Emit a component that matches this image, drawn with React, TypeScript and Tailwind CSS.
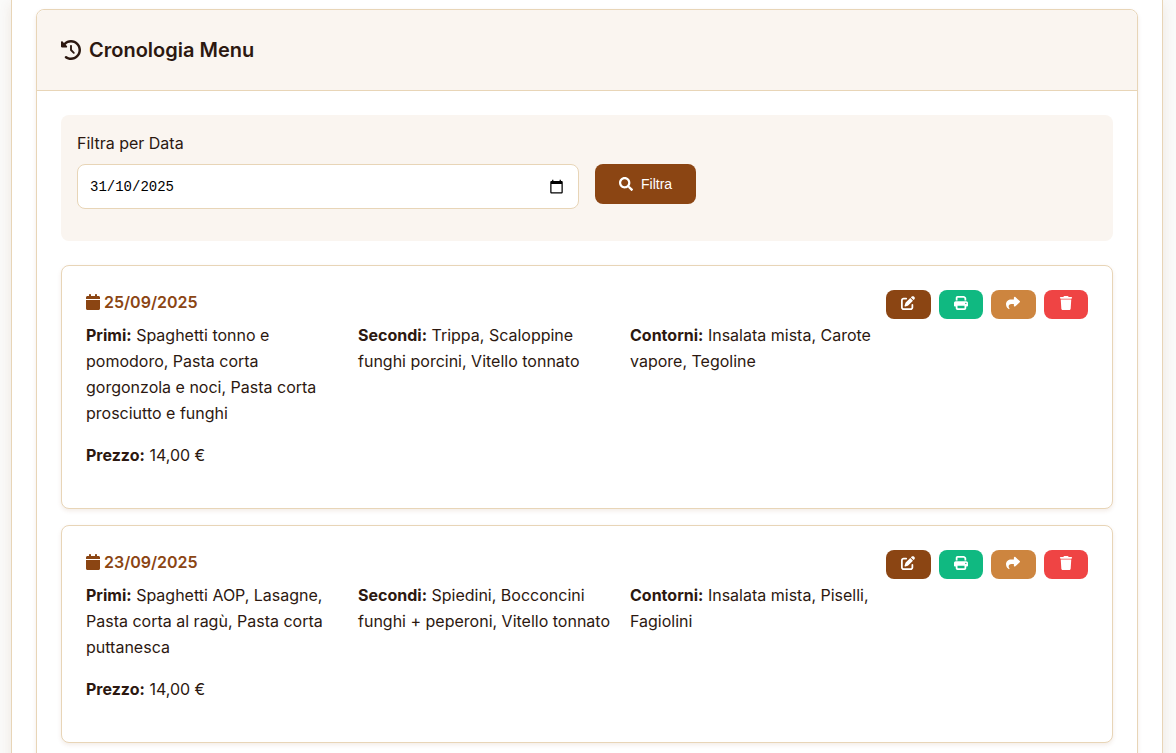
import { useState } from 'react'
import type { ReactNode } from 'react'
import { FaSearch } from 'react-icons/fa'
import {
    FaCalendar,
    FaClockRotateLeft,
    FaPenToSquare,
    FaPrint,
    FaShare,
    FaTrash,
} from 'react-icons/fa6'

interface Menu {
    date: string
    primi: string
    secondi: string
    contorni: string
    price: string
}

const menus: Menu[] = [
    {
        date: '25/09/2025',
        primi: 'Spaghetti tonno e pomodoro, Pasta corta gorgonzola e noci, Pasta corta prosciutto e funghi',
        secondi: 'Trippa, Scaloppine funghi porcini, Vitello tonnato',
        contorni: 'Insalata mista, Carote vapore, Tegoline',
        price: '14,00 €',
    },
    {
        date: '23/09/2025',
        primi: 'Spaghetti AOP, Lasagne, Pasta corta al ragù, Pasta corta puttanesca',
        secondi: 'Spiedini, Bocconcini funghi + peperoni, Vitello tonnato',
        contorni: 'Insalata mista, Piselli, Fagiolini',
        price: '14,00 €',
    },
]

function ActionButton({ label, color, children }: { label: string; color: string; children: ReactNode }) {
    return (
        <button
            type="button"
            aria-label={label}
            className={`flex h-[29px] flex-1 cursor-pointer items-center justify-center rounded-lg pb-1 text-sm text-white ${color}`}
        >
            {children}
        </button>
    )
}

function Course({ name, dishes }: { name: string; dishes: string }) {
    return (
        <div>
            <strong className="font-bold">{name}:</strong> {dishes}
        </div>
    )
}

function MenuCard({ menu }: { menu: Menu }) {
    return (
        <article className="flex items-start rounded-lg border border-[#e8d5b7] bg-white p-6 shadow-[0_2px_4px_rgba(139,69,19,0.1)]">
            <div className="min-w-0 flex-1 pb-4">
                <h3 className="mb-2 flex items-center gap-1 leading-6 font-semibold text-[#8b4513]">
                    <FaCalendar className="h-4 w-3.5" />
                    {menu.date}
                </h3>
                <div className="grid grid-cols-3 gap-4">
                    <Course name="Primi" dishes={menu.primi} />
                    <Course name="Secondi" dishes={menu.secondi} />
                    <Course name="Contorni" dishes={menu.contorni} />
                </div>
                <p className="mt-4">
                    <strong className="font-bold">Prezzo:</strong> {menu.price}
                </p>
            </div>
            <div className="flex w-[202px] gap-2">
                <ActionButton label="Modifica" color="bg-[#8b4513]">
                    <FaPenToSquare />
                </ActionButton>
                <ActionButton label="Stampa" color="bg-[#10b981]">
                    <FaPrint />
                </ActionButton>
                <ActionButton label="Riusa" color="bg-[#cd853f]">
                    <FaShare />
                </ActionButton>
                <ActionButton label="Elimina" color="bg-[#ef4444]">
                    <FaTrash />
                </ActionButton>
            </div>
        </article>
    )
}

export default function App() {
    const [date, setDate] = useState('31/10/2025')

    return (
        <div className="h-screen overflow-hidden bg-[#fafaf9] pr-[13px] pl-[11px] font-['Inter','Liberation_Sans',sans-serif] text-base leading-[26px] text-[#2c1810]">
            <main className="min-h-full border-x border-[#e8d5b7] bg-white px-6 pt-[9px] shadow-[0_4px_12px_rgba(139,69,19,0.1)]">
                <section className="rounded-lg border border-[#e8d5b7] shadow-[0_2px_4px_rgba(139,69,19,0.1)]">
                    <header className="rounded-t-lg border-b border-[#e8d5b7] bg-[#faf5f0] p-6">
                        <h2 className="flex items-center gap-2 text-xl leading-8 font-semibold">
                            <FaClockRotateLeft />
                            Cronologia Menu
                        </h2>
                    </header>

                    <div className="p-6">
                        {/* Filtro */}
                        <form
                            className="mb-6 grid grid-cols-2 gap-4 rounded-lg bg-[#faf5f0] p-4"
                            onSubmit={(e) => e.preventDefault()}
                        >
                            <div className="mb-4">
                                <label htmlFor="filter-date" className="mb-2 block leading-[25px]">
                                    Filtra per Data
                                </label>
                                <div className="relative">
                                    <input
                                        id="filter-date"
                                        type="text"
                                        value={date}
                                        onChange={(e) => setDate(e.target.value)}
                                        className="block h-[45px] w-full rounded-lg border border-[#e8d5b7] bg-white px-3 font-['Liberation_Mono',monospace] text-sm text-black"
                                    />
                                    <svg
                                        viewBox="0 0 24 24"
                                        className="pointer-events-none absolute top-[15px] right-[15px] size-[15px]"
                                        fill="#000"
                                    >
                                        <path d="M20 3h-1V1h-2v2H7V1H5v2H4c-1.1 0-2 .9-2 2v16c0 1.1.9 2 2 2h16c1.1 0 2-.9 2-2V5c0-1.1-.9-2-2-2zm0 18H4V8h16v13z" />
                                    </svg>
                                </div>
                            </div>
                            <div className="pt-[33px]">
                                <button
                                    type="submit"
                                    className="flex h-10 cursor-pointer items-center gap-2 rounded-lg bg-[#8b4513] px-6 font-['Liberation_Sans',sans-serif] text-sm text-white"
                                >
                                    <FaSearch />
                                    Filtra
                                </button>
                            </div>
                        </form>

                        {/* Elenco dei menu */}
                        <div className="flex flex-col gap-4">
                            {menus.map((menu) => (
                                <MenuCard key={menu.date} menu={menu} />
                            ))}
                        </div>
                    </div>
                </section>
            </main>
        </div>
    )
}
